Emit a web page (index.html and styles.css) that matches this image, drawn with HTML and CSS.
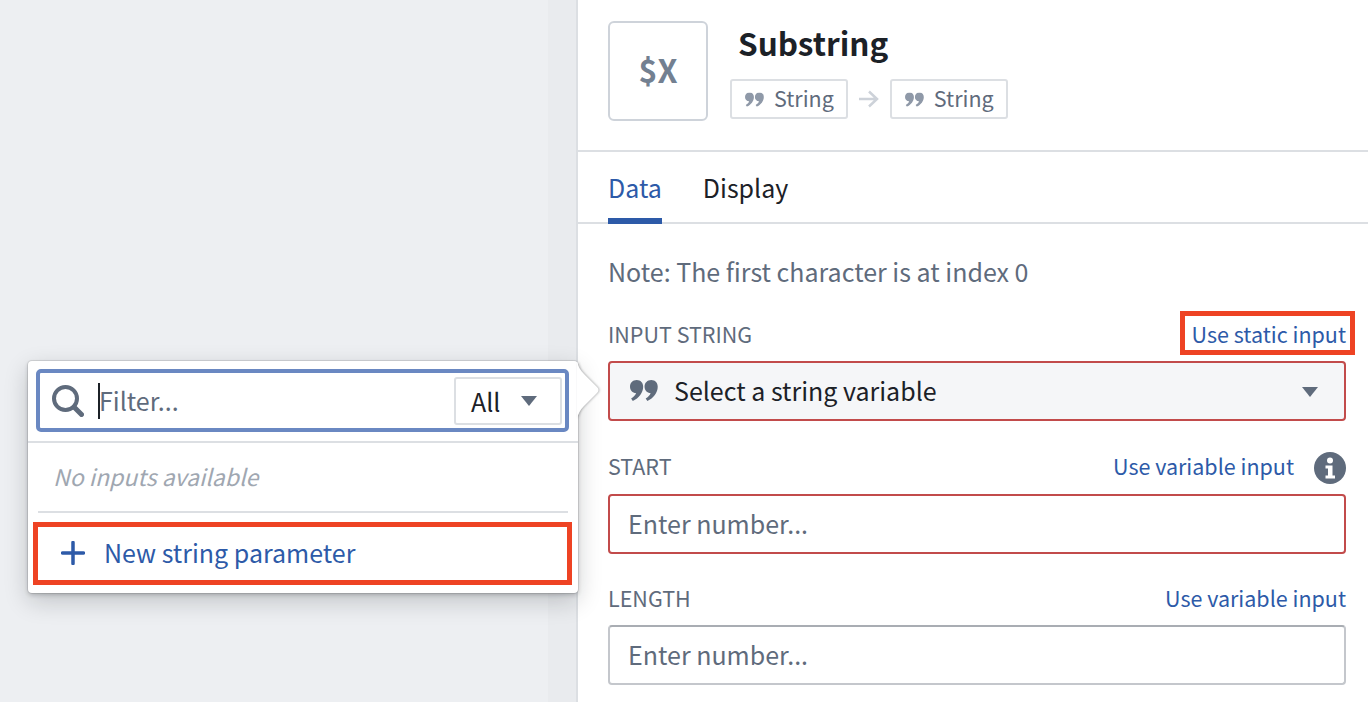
FILE: index.html
```html
<!DOCTYPE html>
<html lang="en">
<head>
<meta charset="utf-8">
<title>Substring</title>
<link rel="stylesheet" href="styles.css">
</head>
<body>
<div class="app">
  <div class="canvas">
    <div class="canvas-strip"></div>
    <div class="popover">
      <svg class="arrow" viewBox="0 0 23 58"><path d="M0 0C1 5 3 9 7 13L20 26Q23 29 20 32L7 45C3 49 1 53 0 58Z" fill="#fff"/></svg>
      <div class="search-wrap">
        <div class="search">
          <svg class="search-icon" viewBox="0 0 32 32"><circle cx="13.500" cy="13.500" r="11.500" fill="none" stroke="#5f6b7c" stroke-width="4"/><path d="M22 22l7.500 7.500" stroke="#5f6b7c" stroke-width="5" stroke-linecap="round"/></svg>
          <span class="caret"></span>
          <span class="filter-text">Filter...</span>
          <div class="all-select">
            <span>All</span>
            <span class="tri tri-small"></span>
          </div>
        </div>
      </div>
      <div class="empty">No inputs available</div>
      <div class="menu-divider"></div>
      <div class="new-param">
        <svg class="plus" viewBox="0 0 24 24"><path d="M12 1.500v21M1.500 12h21" stroke="#2d5aa8" stroke-width="3.500" stroke-linecap="round"/></svg>
        <span>New string parameter</span>
      </div>
    </div>
  </div>
  <div class="panel">
    <header class="head">
      <div class="fn-icon">$X</div>
      <div class="head-text">
        <h1 class="title">Substring</h1>
        <div class="types">
          <div class="type-tag"><svg class="quote" viewBox="0 0 20 15"><use href="#q"/></svg><span>String</span></div>
          <svg class="type-arrow" viewBox="0 0 20 18"><path d="M0 9h17M10 1.500l8 7.500-8 7.500" fill="none" stroke="#cdd2d9" stroke-width="2.500"/></svg>
          <div class="type-tag"><svg class="quote" viewBox="0 0 20 15"><use href="#q"/></svg><span>String</span></div>
        </div>
      </div>
    </header>
    <nav class="tabs">
      <div class="tab tab-active">Data</div>
      <div class="tab">Display</div>
    </nav>
    <div class="body">
      <p class="note">Note: The first character is at index 0</p>
      <div class="field-row field-first">
        <span class="label">INPUT STRING</span>
        <a class="link link-boxed">Use static input</a>
      </div>
      <div class="select">
        <svg class="quote-big" viewBox="0 0 20 15"><use href="#q"/></svg>
        <span class="select-text">Select a string variable</span>
        <span class="tri tri-select"></span>
      </div>
      <div class="field-row field-start">
        <span class="label">START</span>
        <div class="row-right">
          <a class="link">Use variable input</a>
          <svg class="info" viewBox="0 0 32 32"><circle cx="16" cy="16" r="16" fill="#5f6b7c"/><circle cx="16" cy="8.500" r="3" fill="#fff"/><path d="M11.500 13.500h7v10h2.500v3H11.500v-3h2.500v-7h-2.500z" fill="#fff"/></svg>
        </div>
      </div>
      <div class="input input-error input-start">Enter number...</div>
      <div class="field-row field-length">
        <span class="label">LENGTH</span>
        <a class="link">Use variable input</a>
      </div>
      <div class="input input-plain">Enter number...</div>
    </div>
  </div>
</div>
<svg class="defs" aria-hidden="true"><defs><symbol id="q" viewBox="0 0 20 15"><path fill="currentColor" d="M4.800 0C7.600 0 9.400 2 9.400 4.800 9.400 9 6.400 13 2 15L.8 13.300C2.800 12 4 10.700 4.300 9.300 1.800 9.300 0 7.400 0 4.800 0 2 2 0 4.800 0ZM15.200 0C18 0 19.800 2 19.800 4.800 19.800 9 16.800 13 12.400 15L11.200 13.300C13.200 12 14.400 10.700 14.700 9.300 12.200 9.300 10.400 7.400 10.400 4.800 10.400 2 12.400 0 15.200 0Z"/></symbol></defs></svg>
</body>
</html>
```
FILE: styles.css
```css
* { box-sizing: border-box; }
html, body { margin: 0; height: 100%; overflow: hidden; }
body { font-family: "Noto Sans CJK JP", "Noto Sans", sans-serif; background: #fff; color: #1c2127; }
.app { display: flex; width: 1368px; height: 702px; }
.canvas { position: relative; width: 578px; flex: none; background: #edeff2; border-right: 2px solid #dcdfe3; }
.canvas-strip { position: absolute; top: 0; bottom: 0; right: 0; width: 28px; background: #e9ebee; }
.defs { position: absolute; width: 0; height: 0; }

.popover { position: absolute; left: 28px; top: 361px; width: 550px; height: 232px; background: #fff; border-radius: 4px; box-shadow: 0 0 0 1px rgba(17,20,24,.1), 0 2px 4px rgba(17,20,24,.2), 0 8px 24px rgba(17,20,24,.2); }
.arrow { position: absolute; left: 549px; top: 0; width: 23px; height: 58px; filter: drop-shadow(1px 0 1px rgba(17,20,24,.3)); }
.search-wrap { position: relative; height: 82px; padding: 8px 9px 0 8px; border-bottom: 2px solid #dcdfe3; }
.search { display: flex; align-items: center; height: 63px; border: 4px solid #6a88c2; border-radius: 5px; padding: 0 3px 0 12px; }
.search-icon { width: 32px; height: 32px; flex: none; }
.caret { width: 2px; height: 36px; background: #1c2127; margin-left: 14px; flex: none; }
.filter-text { font-size: 25px; color: #5f6b7c; flex: 1; line-height: 36px; margin: -2px 0 0 -1px; }
.all-select { display: flex; align-items: center; gap: 21px; width: 108px; height: 48px; margin-top: 1px; border: 2px solid #dcdfe3; border-radius: 3px; padding-left: 15px; font-size: 25px; color: #1c2127; }
.tri { width: 0; height: 0; border-left: 8.500px solid transparent; border-right: 8.500px solid transparent; border-top: 10px solid #5f6b7c; flex: none; }
.tri-small { margin-top: 0; }
.tri-select { margin-top: 3px; }
.empty { font-size: 23px; font-style: italic; color: #a0a7b1; height: 68px; padding: 15px 0 0 25px; line-height: 36px; }
.menu-divider { height: 2px; background: #dcdfe3; margin: 0 10px; }
.new-param { display: flex; align-items: center; height: 63px; margin: 9px 6px 0 5px; border: 5px solid #ee4323; padding: 0 0 3px 23px; gap: 19px; font-size: 25px; color: #2d5aa8; }
.plus { width: 24px; height: 24px; flex: none; margin-top: 1px; }

.panel { flex: 1; min-width: 0; }
.head { display: flex; height: 152px; padding: 21px 0 0 30px; border-bottom: 2px solid #dcdfe3; }
.fn-icon { display: flex; align-items: center; justify-content: center; width: 100px; height: 100px; border: 2px solid #ced3da; border-radius: 6px; font-size: 32px; font-weight: 700; color: #738091; padding-bottom: 4px; }
.head-text { margin-left: 22px; }
.title { margin: -2px 0 0 8px; font-size: 31.500px; font-weight: 700; line-height: 47px; color: #1c2127; }
.types { display: flex; align-items: center; margin-top: 13px; }
.type-tag { display: flex; align-items: center; gap: 10px; height: 40px; padding: 0 12px 3px 13px; border: 2px solid #dcdfe3; border-radius: 3px; font-size: 21.500px; color: #5f6b7c; }
.quote { width: 19px; height: 15px; color: #8f99a8; flex: none; margin-top: 3px; }
.type-arrow { width: 20px; height: 18px; margin: 0 11px; }
.tabs { display: flex; gap: 41px; height: 72px; padding-left: 30px; border-bottom: 2px solid #dcdfe3; }
.tab { height: 72px; line-height: 70px; font-size: 25px; color: #1c2127; }
.tab-active { color: #2d5aa8; border-bottom: 6px solid #2d5aa8; }
.body { padding: 0 22px 0 30px; }
.note { margin: 0; padding-top: 29px; font-size: 25px; line-height: 36px; color: #5f6b7c; }
.field-row { display: flex; align-items: center; justify-content: space-between; height: 36px; }
.field-first { margin-top: 26px; }
.field-start { margin-top: 26px; }
.field-length { margin-top: 25px; }
.label { font-size: 21.500px; color: #5f6b7c; }
.link { font-size: 21.500px; color: #2d5aa8; }
.link-boxed { position: relative; }
.link-boxed::after { content: ""; position: absolute; inset: -7px -9px -6px -12px; border: 5px solid #ee4323; }
.row-right { display: flex; align-items: center; gap: 20px; }
.info { width: 32px; height: 32px; margin-top: 5px; }
.select { display: flex; align-items: center; height: 60px; margin-top: 10px; padding: 0 26px 2px 20px; background: #f5f6f8; border: 2px solid #c24b4b; border-radius: 4px; font-size: 25px; color: #1c2127; }
.quote-big { width: 28px; height: 21px; color: #5f6b7c; flex: none; }
.select-text { flex: 1; margin-left: 16px; }
.input { display: flex; align-items: center; height: 60px; margin-top: 10px; padding: 0 0 2px 18px; border: 2px solid #c4c7cc; border-top-color: #a9adb3; border-radius: 4px; font-size: 25px; color: #5f6b7c; }
.input-start { margin-top: 11px; }
.input-error { border-color: #c24b4b; }
```
